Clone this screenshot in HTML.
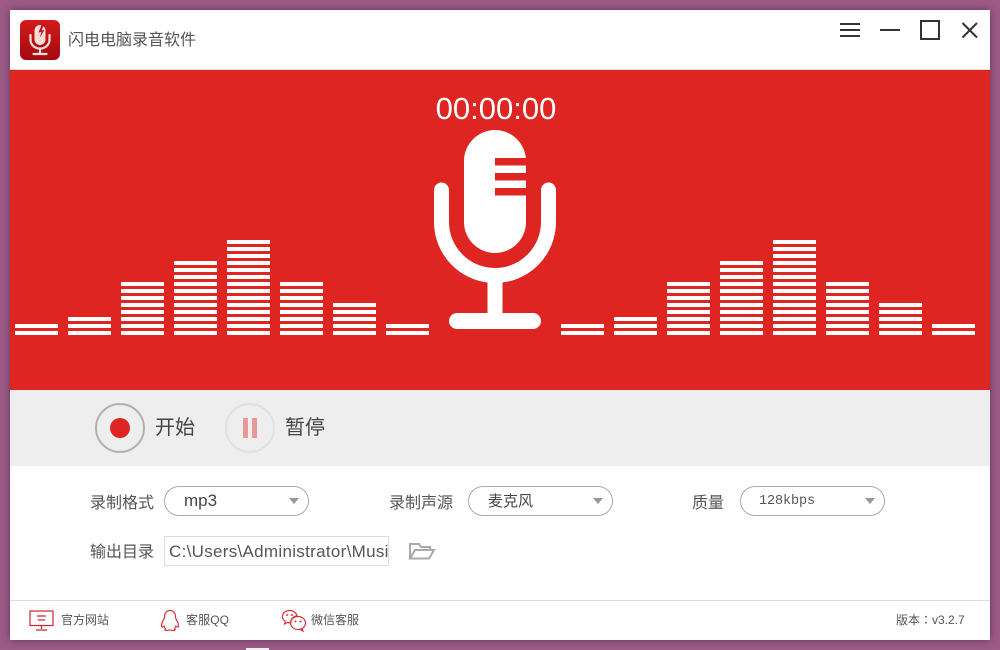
<!DOCTYPE html>
<html><head><meta charset="utf-8"><style>
*{box-sizing:border-box}
html,body{margin:0;padding:0}
body{width:1000px;height:650px;overflow:hidden;position:relative;background:#9d5b87;font-family:"Liberation Sans","Noto Sans CJK SC",sans-serif;color:#444}
.a{position:absolute;white-space:nowrap}
#win{position:absolute;left:10px;top:10px;width:980px;height:630px;background:#fff;box-shadow:0 0 8px rgba(50,20,50,.55)}
.lb{font-size:16px;line-height:20px;color:#555}
.sel{position:absolute;height:30px;width:145px;border:1px solid #aaa;border-radius:15px;background:#fff}
.sel i{position:absolute;right:9px;top:11px;width:0;height:0;border-left:5.5px solid transparent;border-right:5.5px solid transparent;border-top:6px solid #999}
.ft{font-size:12px;line-height:16px;color:#555}
</style></head><body>
<div id="win"></div>
<div class="a" style="left:246px;top:648px;width:23px;height:2px;background:#eee"></div>

<svg class="a" style="left:20px;top:20px" width="40" height="40" viewBox="0 0 40 40">
<defs><linearGradient id="g" x1="0" y1="0" x2="0" y2="1"><stop offset="0" stop-color="#d41a1c"/><stop offset="1" stop-color="#a20a0e"/></linearGradient></defs>
<rect width="40" height="40" rx="6" fill="url(#g)"/>
<rect x="14.500" y="5" width="11" height="20" rx="5.500" fill="#f9dcd8"/>
<path d="M22 4L18.500 12.500L21.500 12L19.500 18L24.500 10L21.500 10.500L24.500 4Z" fill="#c01216"/>
<path d="M10.500 15v5a9.500 8.500 0 0 0 19 0v-5" fill="none" stroke="#f9dcd8" stroke-width="2.200" stroke-linecap="round"/>
<path d="M20 29v4M13.500 34h13" fill="none" stroke="#f9dcd8" stroke-width="2.200" stroke-linecap="round"/>
</svg>
<div class="a" style="left:68px;top:30px;font-size:16px;line-height:22px;color:#555">闪电电脑录音软件</div>

<svg class="a" style="left:830px;top:10px" width="160" height="40" viewBox="0 0 160 40" fill="none" stroke="#333" stroke-width="2">
<path d="M10 14h20M10 20h20M10 26h20"/>
<path d="M50 20h20"/>
<rect x="91" y="11" width="18" height="18"/>
<path d="M132.500 13l14.500 14.500M147 13l-14.500 14.500"/>
</svg>
<div class="a" style="left:10px;top:69px;width:980px;height:1px;background:#ddd"></div>

<div class="a" style="left:10px;top:70px;width:980px;height:320px;background:#de2521"></div>
<div class="a" style="left:396px;top:89px;width:200px;text-align:center;font-size:31px;line-height:40px;color:#fff">00:00:00</div>

<svg class="a" style="left:0;top:0" width="1000" height="400" viewBox="0 0 1000 400">
<defs>
<pattern id="b" width="43" height="7" patternUnits="userSpaceOnUse" x="0" y="2"><rect width="43" height="4" fill="#fff"/></pattern>
</defs>
<g fill="url(#b)">
<rect x="15" y="324" width="43" height="11"/>
<rect x="68" y="317" width="43" height="18"/>
<rect x="121" y="282" width="43" height="53"/>
<rect x="174" y="261" width="43" height="74"/>
<rect x="227" y="240" width="43" height="95"/>
<rect x="280" y="282" width="43" height="53"/>
<rect x="333" y="303" width="43" height="32"/>
<rect x="386" y="324" width="43" height="11"/>
<rect x="561" y="324" width="43" height="11"/>
<rect x="614" y="317" width="43" height="18"/>
<rect x="667" y="282" width="43" height="53"/>
<rect x="720" y="261" width="43" height="74"/>
<rect x="773" y="240" width="43" height="95"/>
<rect x="826" y="282" width="43" height="53"/>
<rect x="879" y="303" width="43" height="32"/>
<rect x="932" y="324" width="43" height="11"/>
</g>
<rect x="464" y="130" width="62" height="123" rx="31" fill="#fff"/>
<g fill="#de2521"><rect x="495" y="158" width="32" height="7.500"/><rect x="495" y="173" width="32" height="7.500"/><rect x="495" y="188" width="32" height="7.500"/></g>
<path d="M441.500 190V222a53.500 53.500 0 0 0 107 0V190" fill="none" stroke="#fff" stroke-width="15" stroke-linecap="round"/>
<rect x="487.500" y="278" width="15" height="38" fill="#fff"/>
<rect x="449" y="313" width="92" height="16" rx="8" fill="#fff"/>
</svg>

<div class="a" style="left:10px;top:390px;width:980px;height:76px;background:#eeeeee"></div>
<div class="a" style="left:95px;top:403px;width:50px;height:50px;border:2px solid #b0b0b0;border-radius:50%"></div>
<div class="a" style="left:110px;top:418px;width:20px;height:20px;background:#de2521;border-radius:50%"></div>
<div class="a" style="left:155px;top:414px;font-size:20px;line-height:28px;color:#444">开始</div>
<div class="a" style="left:225px;top:403px;width:50px;height:50px;border:2px solid #e0e0e0;border-radius:50%"></div>
<div class="a" style="left:243px;top:418px;width:5px;height:20px;background:#e59a98"></div>
<div class="a" style="left:252px;top:418px;width:5px;height:20px;background:#e59a98"></div>
<div class="a" style="left:285px;top:414px;font-size:20px;line-height:28px;color:#444">暂停</div>

<div class="a lb" style="left:90px;top:494px">录制格式</div>
<div class="sel" style="left:164px;top:486px"><i></i></div>
<div class="a" style="left:184px;top:491px;font-size:17px;line-height:20px;color:#444">mp3</div>
<div class="a lb" style="left:389px;top:494px">录制声源</div>
<div class="sel" style="left:468px;top:486px"><i></i></div>
<div class="a" style="left:488px;top:492px;font-size:15px;line-height:20px;color:#444">麦克风</div>
<div class="a lb" style="left:692px;top:494px">质量</div>
<div class="sel" style="left:740px;top:486px"><i></i></div>
<div class="a" style="left:759px;top:493px;font-size:13.500px;line-height:18px;color:#555;font-family:'Liberation Mono',monospace;letter-spacing:-.1px">128kbps</div>

<div class="a lb" style="left:90px;top:543px">输出目录</div>
<div class="a" style="left:164px;top:536px;width:225px;height:30px;border:1px solid #ddd;overflow:hidden;padding-left:4px;font-size:17px;line-height:29px;color:#555;letter-spacing:.3px">C:\Users\Administrator\Music</div>
<svg class="a" style="left:408px;top:541px" width="28" height="20" viewBox="0 0 28 20" fill="none" stroke="#aaa" stroke-width="2">
<path d="M2 17.500V3h9l2 3h9v3"/><path d="M2 17.500L7 9H26L21 17.500Z"/>
</svg>

<div class="a" style="left:10px;top:600px;width:980px;height:1px;background:#ddd"></div>
<svg class="a" style="left:29px;top:610px" width="26" height="22" viewBox="0 0 26 22" fill="none" stroke="#c9282d" stroke-width="1.200">
<rect x="1" y="1" width="23" height="14.500"/><path d="M8 6h9M9 10h7M12.500 16v3M7 20h11"/>
</svg>
<div class="a ft" style="left:61px;top:612px">官方网站</div>
<svg class="a" style="left:160px;top:609px" width="20" height="23" viewBox="0 0 20 23" fill="none" stroke="#d8353a" stroke-width="1.200">
<path d="M10 1.500c-3.500 0-5.500 3-5.500 6 0 1 0 1.500-.5 2.500-1 1.500-2.500 4.500-2.500 7 0 1.500 1 1.500 2.500 0 .5 1.500 1 2 1.500 3-1 .5-1 1.500 1 1.500 1.500 0 2.500-.5 3.500-.5s2 .5 3.500.5c2 0 2-1 1-1.500.5-1 1-1.500 1.500-3 1.500 1.500 2.500 1.500 2.500 0 0-2.500-1.500-5.500-2.500-7-.5-1-.5-1.500-.5-2.500 0-3-2-6-5.500-6Z"/>
</svg>
<div class="a ft" style="left:186px;top:612px;letter-spacing:.1px">客服QQ</div>
<svg class="a" style="left:281px;top:609px" width="26" height="23" viewBox="0 0 26 23" fill="none" stroke="#d8353a" stroke-width="1.200">
<path d="M10 13.500c-.5-4 3-6.500 6-6.500-.5-3-3.500-5.500-7.500-5.500C4.500 1.500 1.500 4.200 1.500 7.500c0 2 1 3.700 2.700 4.800L3.500 15l3-1.500c1 .3 2.300.3 3.500 0Z"/>
<ellipse cx="17" cy="14" rx="7.500" ry="6.500"/><path d="M21 19.500l1 2.500-3.500-1.800"/>
<circle cx="14.500" cy="12.500" r="1" fill="#d8353a" stroke="none"/><circle cx="19.500" cy="12.500" r="1" fill="#d8353a" stroke="none"/>
<circle cx="6" cy="6" r="1" fill="#d8353a" stroke="none"/><circle cx="11" cy="6" r="1" fill="#d8353a" stroke="none"/>
</svg>
<div class="a ft" style="left:311px;top:612px">微信客服</div>
<div class="a ft" style="left:896px;top:612px;font-family:'Liberation Sans','Noto Sans CJK TC',sans-serif">版本：v3.2.7</div>
</body></html>
